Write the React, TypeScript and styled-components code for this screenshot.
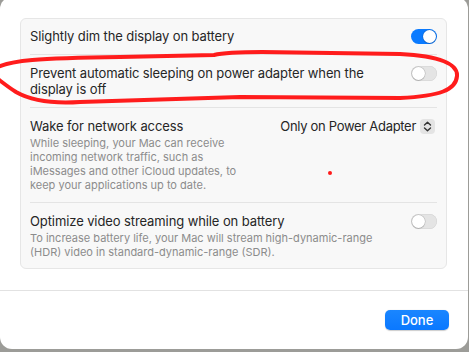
import styled, { createGlobalStyle } from 'styled-components'

const GlobalStyle = createGlobalStyle`
  html, body {
    margin: 0;
    padding: 0;
    width: 469px;
    height: 352px;
    overflow: hidden;
    background: #9c9c98;
  }
  body {
    font-family: Inter, "Noto Sans", sans-serif;
    -webkit-font-smoothing: antialiased;
  }
`

const Sheet = styled.div`
  position: relative;
  box-sizing: border-box;
  width: 468px;
  height: 352px;
  margin-top: -3px;
  background: #ffffff;
  border-radius: 12px;
  display: flex;
  flex-direction: column;
  padding-top: 21px;
`

const Group = styled.div`
  margin: 0 21px 0 20px;
  background: #f8f8f8;
  border: 1px solid #e6e6e6;
  border-radius: 6px;
  padding: 0 9px;
`

const Row = styled.div<{ $first?: boolean; $last?: boolean }>`
  display: flex;
  align-items: flex-start;
  justify-content: space-between;
  padding: ${p => (p.$first ? '9px' : '10px')} 0 ${p => (p.$last ? '9px' : '10px')};
  border-bottom: ${p => (p.$last ? 'none' : '1px solid #e4e4e4')};
`

const RowText = styled.div`
  display: flex;
  flex-direction: column;
  gap: 2px;
`

const Title = styled.div`
  font-size: 13px;
  line-height: 16px;
  color: #262626;
  letter-spacing: -0.1px;
`

const Desc = styled.div`
  font-size: 11px;
  line-height: 14px;
  color: #8c8c8c;
`

const Track = styled.div<{ $on?: boolean }>`
  position: relative;
  flex-shrink: 0;
  width: 26px;
  height: 15px;
  margin-top: 1px;
  border-radius: 8px;
  background: ${p => (p.$on ? '#0b7bff' : '#e4e4e4')};
  box-shadow: ${p => (p.$on ? 'none' : 'inset 0 0 0 0.5px #d2d2d2')};
`

const Knob = styled.div<{ $on?: boolean }>`
  position: absolute;
  top: 1px;
  left: ${p => (p.$on ? '12px' : '1px')};
  width: 13px;
  height: 13px;
  border-radius: 50%;
  background: #ffffff;
  box-shadow: 0 0 0 0.5px rgba(0, 0, 0, 0.18), 0 1px 1px rgba(0, 0, 0, 0.12);
`

const Popup = styled.div`
  display: flex;
  align-items: center;
  gap: 4px;
  margin-right: 2px;
  font-size: 13px;
  line-height: 16px;
  color: #262626;
  letter-spacing: -0.3px;
`

const Stepper = styled.div`
  width: 15px;
  height: 15px;
  border-radius: 4px;
  background: #e4e4e4;
  display: flex;
  align-items: center;
  justify-content: center;
`

const Footer = styled.div`
  margin-top: 21px;
  border-top: 1px solid #e2e2e2;
  display: flex;
  justify-content: flex-end;
  padding: 19px 19px 0 0;
`

const DoneButton = styled.button`
  width: 64px;
  height: 20px;
  border: none;
  border-radius: 5px;
  background: linear-gradient(#1a86ff, #0a78ff);
  color: #ffffff;
  font-family: Inter, "Noto Sans", sans-serif;
  font-size: 13px;
  font-weight: 500;
  padding: 0;
  box-shadow: 0 0.5px 1px rgba(0, 0, 0, 0.2);
`

const Scribble = styled.svg`
  position: absolute;
  left: 0;
  top: 3px;
  pointer-events: none;
`

const RedDot = styled.div`
  position: absolute;
  left: 328px;
  top: 174px;
  width: 4px;
  height: 4px;
  border-radius: 50%;
  background: #ff1a1a;
`

const Toggle = ({ on }: { on?: boolean }) => (
  <Track $on={on}>
    <Knob $on={on} />
  </Track>
)

export default function App() {
  return (
    <>
      <GlobalStyle />
      <Sheet>
        <Group>
          <Row $first>
            <Title>Slightly dim the display on battery</Title>
            <Toggle on />
          </Row>
          <Row>
            <Title>
              Prevent automatic sleeping on power adapter when the
              <br />
              display is off
            </Title>
            <Toggle />
          </Row>
          <Row>
            <RowText>
              <Title>Wake for network access</Title>
              <Desc>
                While sleeping, your Mac can receive
                <br />
                incoming network traffic, such as
                <br />
                iMessages and other iCloud updates, to
                <br />
                keep your applications up to date.
              </Desc>
            </RowText>
            <Popup>
              Only on Power Adapter
              <Stepper>
                <svg width="9" height="11" viewBox="0 0 9 11">
                  <path
                    d="M1.5 4 L4.5 1.2 L7.5 4 M1.5 7 L4.5 9.8 L7.5 7"
                    fill="none"
                    stroke="#333"
                    strokeWidth="1.4"
                    strokeLinecap="round"
                    strokeLinejoin="round"
                  />
                </svg>
              </Stepper>
            </Popup>
          </Row>
          <Row $last>
            <RowText>
              <Title>Optimize video streaming while on battery</Title>
              <Desc>
                To increase battery life, your Mac will stream high-dynamic-range
                <br />
                (HDR) video in standard-dynamic-range (SDR).
              </Desc>
            </RowText>
            <Toggle />
          </Row>
        </Group>
        <Footer>
          <DoneButton>Done</DoneButton>
        </Footer>
        <Scribble width="469" height="120" viewBox="0 0 469 120">
          <path
            d="M-6 69 C 8 60 40 58 120 57 L 214 55 C 226 52 244 52 262 52 L 400 54 C 440 56 458 64 457 76 C 456 90 440 96 400 98 L 240 97 L 80 102 C 50 104 30 100 16 92 C 8 87 2 82 -6 76"
            fill="none"
            stroke="#ff1c1c"
            strokeWidth="4"
            strokeLinecap="round"
            strokeLinejoin="round"
          />
        </Scribble>
        <RedDot />
      </Sheet>
    </>
  )
}
